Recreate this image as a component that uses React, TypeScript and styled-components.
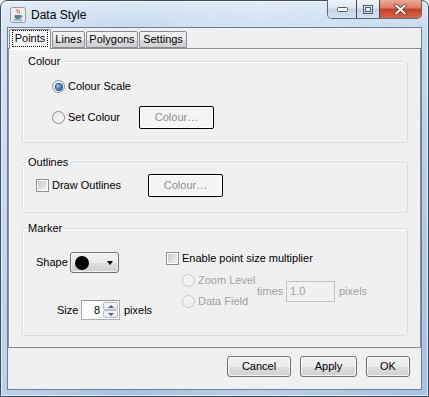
import styled, { createGlobalStyle } from 'styled-components';

const GlobalStyle = createGlobalStyle`
  html, body {
    margin: 0;
    padding: 0;
  }
  body {
    width: 429px;
    height: 397px;
    overflow: hidden;
    background: #fff;
    font-family: "Liberation Sans", Tahoma, Arial, sans-serif;
    font-size: 11px;
    line-height: 13px;
    color: #000;
  }
`;

// Window frame
const Window = styled.div`
  box-sizing: border-box;
  width: 429px;
  height: 397px;
  display: flex;
  flex-direction: column;
  padding: 0 6px 6px;
  border: 1px solid #3f4d5e;
  border-radius: 7px 7px 0 0;
  background:
    linear-gradient(90deg, rgba(255,255,255,0.25), rgba(255,255,255,0) 30%, rgba(255,255,255,0.2) 60%, rgba(255,255,255,0) 100%),
    linear-gradient(180deg, #dae8f6 0%, #c6dbf0 7%, #b3cdea 50%, #a6c3e4 100%);
  box-shadow: inset 0 0 0 1px rgba(255,255,255,0.6);
`;

const TitleBar = styled.div`
  height: 26px;
  display: flex;
  align-items: flex-start;
`;

const AppIcon = styled.svg`
  margin: 6px 0 0 3px;
  flex: none;
`;

const Title = styled.div`
  margin: 7px 0 0 5px;
  font-size: 12px;
  line-height: 14px;
  color: #000;
`;

const CaptionGroup = styled.div`
  margin: -1px 0 0 auto;
  display: flex;
  height: 18px;
  border: 1px solid #5a6a7d;
  border-top: none;
  border-radius: 0 0 5px 5px;
  overflow: hidden;
`;

const CaptionButton = styled.div<{ $w: number; $close?: boolean }>`
  width: ${(p) => p.$w}px;
  display: flex;
  align-items: center;
  justify-content: center;
  background: ${(p) =>
    p.$close
      ? 'linear-gradient(180deg, #eba899 0%, #dc7a62 45%, #c63f27 50%, #d8654a 100%)'
      : 'linear-gradient(180deg, #eef4fa 0%, #dce7f3 45%, #c3d4e8 50%, #d3e1f0 100%)'};
  & + & {
    border-left: 1px solid ${(p) => (p.$close ? '#6e3b34' : '#8a9bb0')};
  }
`;

// Dialog body
const Body = styled.div`
  flex: 1;
  display: flex;
  flex-direction: column;
  background: #f0f0f0;
  border: 1px solid #6d7f96;
`;

const TabArea = styled.div`
  padding-top: 1px;
  display: flex;
  flex-direction: column;
`;

const TabStrip = styled.div`
  height: 19px;
  display: flex;
  align-items: flex-end;
  padding-left: 1px;
  position: relative;
  z-index: 1;
`;

const Tab = styled.div<{ $w: number; $active?: boolean }>`
  box-sizing: border-box;
  width: ${(p) => p.$w}px;
  height: ${(p) => (p.$active ? 20 : 17)}px;
  margin-bottom: ${(p) => (p.$active ? -1 : 0)}px;
  margin-right: 1px;
  display: flex;
  align-items: center;
  justify-content: center;
  border: 1px solid #898c95;
  border-bottom: ${(p) => (p.$active ? 'none' : '1px solid #898c95')};
  border-radius: 2px 2px 0 0;
  background: ${(p) =>
    p.$active
      ? '#fbfbfb'
      : 'linear-gradient(180deg, #f2f2f2 0%, #ebebeb 50%, #dddddd 51%, #cfcfcf 100%)'};
`;

const FocusText = styled.span`
  padding: 1px 2px;
  border: 1px dotted #000;
  margin-top: -2px;
`;

const TabPanel = styled.div`
  box-sizing: border-box;
  height: 300px;
  border: 1px solid #898c95;
  box-shadow: inset 1px 1px 0 #fff;
  padding: 6px 12px 0 13px;
  display: flex;
  flex-direction: column;
`;

const Group = styled.fieldset<{ $top?: number; $pt: number; $pb: number }>`
  margin: ${(p) => p.$top ?? 0}px 0 0;
  padding: ${(p) => p.$pt}px 0 ${(p) => p.$pb}px 0;
  border: 1px solid #d5dfe5;
  border-radius: 3px;
  box-shadow: inset 1px 1px 0 #fff;
  min-width: 0;
`;

const Legend = styled.legend`
  padding: 0 1px;
  margin-left: 4px;
  line-height: 13px;
`;

const GroupContent = styled.div<{ $indent: number }>`
  padding-left: ${(p) => p.$indent}px;
`;

const Row = styled.div<{ $col?: number }>`
  display: grid;
  grid-template-columns: ${(p) => (p.$col ? `${p.$col}px auto` : 'auto')};
  align-items: center;
  justify-content: start;
  height: 23px;
`;

const Stack = styled.div<{ $gap: number; $w?: number }>`
  display: flex;
  flex-direction: column;
  gap: ${(p) => p.$gap}px;
  width: ${(p) => (p.$w ? `${p.$w}px` : 'auto')};
  flex: none;
`;

const Option = styled.label<{ $disabled?: boolean }>`
  display: flex;
  align-items: center;
  gap: 3px;
  white-space: nowrap;
  color: ${(p) => (p.$disabled ? '#a0a0a0' : '#000')};
`;

const Radio = styled.span<{ $checked?: boolean; $disabled?: boolean }>`
  box-sizing: border-box;
  width: 13px;
  height: 13px;
  border-radius: 50%;
  flex: none;
  display: flex;
  align-items: center;
  justify-content: center;
  border: 1px solid ${(p) => (p.$disabled ? '#c6c7c8' : '#8d8e8f')};
  background: ${(p) =>
    p.$disabled
      ? 'linear-gradient(135deg, #f8f8f8, #ececec)'
      : 'linear-gradient(135deg, #e6e6e6, #fdfdfd)'};
  &::after {
    content: '';
    display: ${(p) => (p.$checked ? 'block' : 'none')};
    width: 6px;
    height: 6px;
    border-radius: 50%;
    background: radial-gradient(circle at 35% 35%, #9fd0f5 0%, #3a86cf 45%, #19457f 100%);
    box-shadow: 0 0 0 1px #1d4e86;
  }
`;

const Check = styled.span`
  box-sizing: border-box;
  width: 13px;
  height: 13px;
  flex: none;
  border: 1px solid #8e8f8f;
  padding: 1px;
  background: #fff;
  &::after {
    content: '';
    display: block;
    width: 9px;
    height: 9px;
    background: linear-gradient(135deg, #c6cbd1 0%, #e2e4e7 60%, #f4f4f4 100%);
  }
`;

const ColourButton = styled.div`
  box-sizing: border-box;
  width: 75px;
  height: 23px;
  display: flex;
  align-items: center;
  justify-content: center;
  border: 1px solid #000;
  border-radius: 2px;
  background: #f4f4f4;
  box-shadow: inset 0 0 0 1px #fff;
  color: #8d8d8d;
`;

const MarkerGrid = styled.div`
  display: grid;
  grid-template-columns: 130px auto;
`;

const LeftCol = styled.div`
  display: flex;
  flex-direction: column;
  gap: 27px;
`;

const FieldRow = styled.div<{ $indent?: number }>`
  display: flex;
  align-items: center;
  margin-left: ${(p) => p.$indent ?? 0}px;
`;

const Label = styled.span<{ $w?: number; $ml?: number; $disabled?: boolean }>`
  width: ${(p) => (p.$w ? `${p.$w}px` : 'auto')};
  margin-left: ${(p) => p.$ml ?? 0}px;
  flex: none;
  white-space: nowrap;
  color: ${(p) => (p.$disabled ? '#a0a0a0' : '#000')};
`;

const Combo = styled.div`
  box-sizing: border-box;
  width: 49px;
  height: 21px;
  display: flex;
  align-items: center;
  padding: 0 5px 0 4px;
  justify-content: space-between;
  border: 1px solid #707070;
  border-radius: 3px;
  background: linear-gradient(180deg, #f2f2f2 0%, #ebebeb 50%, #dddddd 51%, #cfcfcf 100%);
  box-shadow: inset 0 0 0 1px rgba(255,255,255,0.7);
`;

const Dot = styled.span`
  width: 14px;
  height: 14px;
  border-radius: 50%;
  background: #000;
`;

const Arrow = styled.span`
  width: 0;
  height: 0;
  border-left: 3.5px solid transparent;
  border-right: 3.5px solid transparent;
  border-top: 4px solid #000;
  margin-top: 1px;
`;

const Spinner = styled.div`
  box-sizing: border-box;
  width: 39px;
  height: 20px;
  display: flex;
  align-items: stretch;
  border: 1px solid #abadb3;
  border-top-color: #8f9298;
  background: #fff;
  padding: 1px;
`;

const SpinValue = styled.span`
  flex: 1;
  text-align: right;
  padding-right: 3px;
  line-height: 16px;
`;

const SpinButtons = styled.div`
  width: 15px;
  display: flex;
  flex-direction: column;
`;

const SpinButton = styled.div<{ $up?: boolean }>`
  flex: 1;
  display: flex;
  align-items: center;
  justify-content: center;
  border: 1px solid #b6bcc6;
  border-radius: 2px;
  background: linear-gradient(180deg, #f7f9fb, #dfe6ee);
  &::after {
    content: '';
    border-left: 3px solid transparent;
    border-right: 3px solid transparent;
    ${(p) => (p.$up ? 'border-bottom: 3px solid #4c607a;' : 'border-top: 3px solid #4c607a;')}
  }
`;

const TextField = styled.div`
  box-sizing: border-box;
  width: 49px;
  height: 21px;
  border: 1px solid #c0c2c8;
  padding: 0 3px;
  display: flex;
  align-items: center;
  color: #a0a0a0;
`;

const Footer = styled.div`
  flex: 1;
  display: flex;
  justify-content: flex-end;
  align-items: flex-start;
  gap: 9px;
  padding: 8px 11px 0 0;
`;

const PushButton = styled.div<{ $w: number }>`
  box-sizing: border-box;
  width: ${(p) => p.$w}px;
  height: 21px;
  display: flex;
  align-items: center;
  justify-content: center;
  border: 1px solid #707070;
  border-radius: 3px;
  background: linear-gradient(180deg, #f2f2f2 0%, #ebebeb 50%, #dddddd 51%, #cfcfcf 100%);
  box-shadow: inset 0 0 0 1px rgba(255,255,255,0.75);
`;

const JavaIcon = () => (
  <AppIcon width="16" height="16" viewBox="0 0 16 16">
    <rect x="0.5" y="0.5" width="15" height="15" rx="2" fill="#eeeeee" stroke="#9a9a9a" />
    <path d="M7 2 C5.5 3.5 9 4.5 7.5 6.5 M9 2.5 C8 4 10.5 4.5 9 6.5" stroke="#e4572e" strokeWidth="1" fill="none" />
    <path d="M4.5 8 H11 V10 C11 11.5 9.5 12 7.75 12 C6 12 4.5 11.5 4.5 10 Z" fill="#5382a1" />
    <path d="M11 8.5 C12.5 8.5 12.5 10.5 11 10.5" stroke="#5382a1" fill="none" />
    <path d="M3.5 13 H12" stroke="#5382a1" strokeWidth="1" />
  </AppIcon>
);

const App = () => {
  return (
    <>
      <GlobalStyle />
      <Window>
        <TitleBar>
          <JavaIcon />
          <Title>Data Style</Title>
          <CaptionGroup>
            <CaptionButton $w={28}>
              <svg width="11" height="6" viewBox="0 0 11 6">
                <rect x="0.5" y="1.5" width="10" height="4" rx="1" fill="#fff" stroke="#4b5a6e" />
              </svg>
            </CaptionButton>
            <CaptionButton $w={22}>
              <svg width="10" height="9" viewBox="0 0 10 9">
                <rect x="0.5" y="0.5" width="9" height="8" fill="none" stroke="#4b5a6e" />
                <rect x="2.5" y="2.5" width="5" height="4" fill="#fff" stroke="#4b5a6e" />
              </svg>
            </CaptionButton>
            <CaptionButton $w={41} $close>
              <svg width="13" height="11" viewBox="0 0 13 11">
                <path d="M2 1.5 L11 9.5 M11 1.5 L2 9.5" stroke="#5a2a22" strokeWidth="3.4" strokeLinecap="round" />
                <path d="M2 1.5 L11 9.5 M11 1.5 L2 9.5" stroke="#fff" strokeWidth="2" strokeLinecap="round" />
              </svg>
            </CaptionButton>
          </CaptionGroup>
        </TitleBar>

        <Body>
          <TabArea>
            <TabStrip>
              <Tab $w={42} $active>
                <FocusText>Points</FocusText>
              </Tab>
              <Tab $w={33}>Lines</Tab>
              <Tab $w={52}>Polygons</Tab>
              <Tab $w={48}>Settings</Tab>
            </TabStrip>
            <TabPanel>
              <Group $pt={7} $pb={13}>
                <Legend>Colour</Legend>
                <GroupContent $indent={29}>
                  <Stack $gap={8}>
                    <Row>
                      <Option>
                        <Radio $checked />
                        Colour Scale
                      </Option>
                    </Row>
                    <Row $col={87}>
                      <Option>
                        <Radio />
                        Set Colour
                      </Option>
                      <ColourButton>Colour…</ColourButton>
                    </Row>
                  </Stack>
                </GroupContent>
              </Group>

              <Group $top={13} $pt={5} $pb={15}>
                <Legend>Outlines</Legend>
                <GroupContent $indent={13}>
                  <Row $col={112}>
                    <Option>
                      <Check />
                      Draw Outlines
                    </Option>
                    <ColourButton>Colour…</ColourButton>
                  </Row>
                </GroupContent>
              </Group>

              <Group $top={9} $pt={17} $pb={15}>
                <Legend>Marker</Legend>
                <GroupContent $indent={13}>
                  <MarkerGrid>
                    <LeftCol>
                      <FieldRow>
                        <Label $w={34}>Shape</Label>
                        <Combo>
                          <Dot />
                          <Arrow />
                        </Combo>
                      </FieldRow>
                      <FieldRow $indent={21}>
                        <Label $w={24}>Size</Label>
                        <Spinner>
                          <SpinValue>8</SpinValue>
                          <SpinButtons>
                            <SpinButton $up />
                            <SpinButton />
                          </SpinButtons>
                        </Spinner>
                        <Label $ml={4}>pixels</Label>
                      </FieldRow>
                    </LeftCol>
                    <Stack $gap={9}>
                      <Option>
                        <Check />
                        Enable point size multiplier
                      </Option>
                      <FieldRow $indent={16}>
                        <Stack $gap={8} $w={75}>
                          <Option $disabled>
                            <Radio $disabled />
                            Zoom Level
                          </Option>
                          <Option $disabled>
                            <Radio $disabled />
                            Data Field
                          </Option>
                        </Stack>
                        <Label $w={29} $disabled>times</Label>
                        <TextField>1.0</TextField>
                        <Label $ml={4} $disabled>pixels</Label>
                      </FieldRow>
                    </Stack>
                  </MarkerGrid>
                </GroupContent>
              </Group>
            </TabPanel>
          </TabArea>

          <Footer>
            <PushButton $w={64}>Cancel</PushButton>
            <PushButton $w={57}>Apply</PushButton>
            <PushButton $w={44}>OK</PushButton>
          </Footer>
        </Body>
      </Window>
    </>
  );
};

export default App;
